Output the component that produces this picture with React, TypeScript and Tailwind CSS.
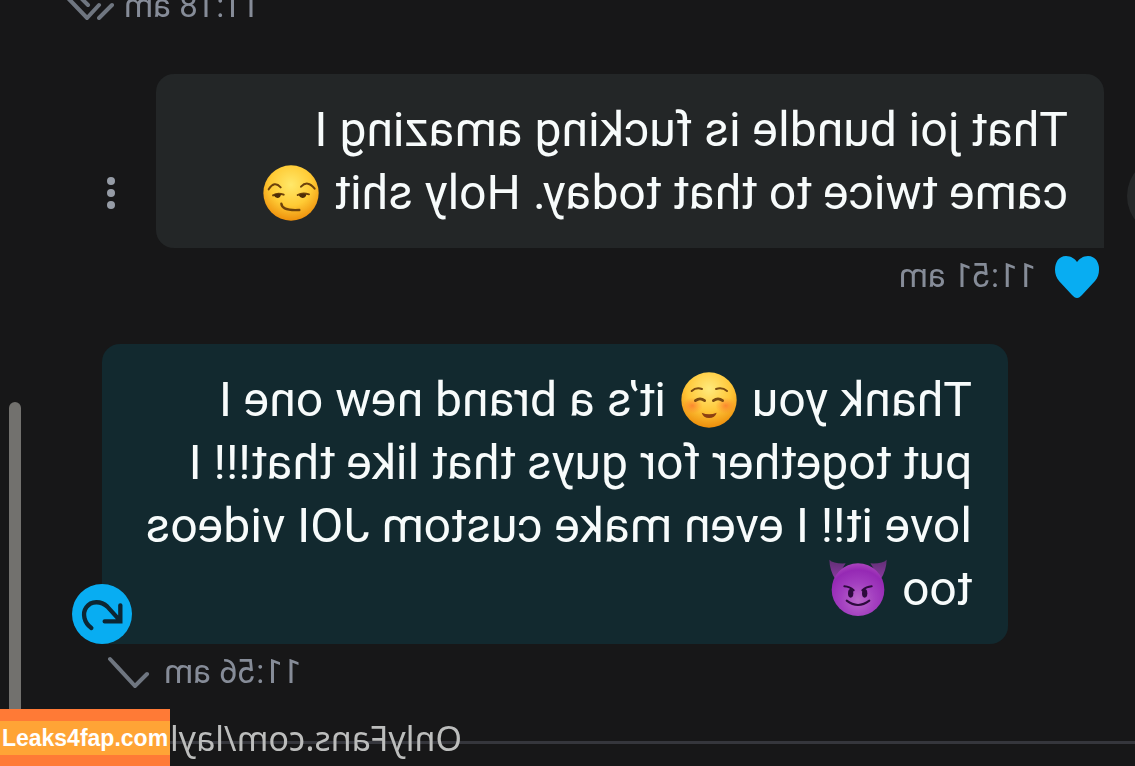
import type { ReactNode } from "react";

function Smirk() {
  return (
    <svg viewBox="0 0 168 168" className="mx-[3px] inline-block size-14 -scale-x-100 align-[-12px]" role="img" aria-label="smirking face">
      <defs>
        <radialGradient id="smirkFace" cx="0.5" cy="0.35" r="0.68">
          <stop offset="0" stopColor="#ffe86a" />
          <stop offset="0.55" stopColor="#ffcb35" />
          <stop offset="1" stopColor="#ec8a08" />
        </radialGradient>
      </defs>
      <circle cx="84" cy="84" r="83" fill="url(#smirkFace)" />
      <g fill="none" stroke="#6d420b" strokeLinecap="round">
        <path d="M17 73Q34 46 53 67M114 65Q134 44 155 71" strokeWidth="6" />
        <path d="M30 91Q44 82 62 89M104 90Q118 82 138 88" strokeWidth="6" />
        <path d="M55 116C56 132 76 137 109 135" strokeWidth="7" />
      </g>
      <path d="M32 90Q43 84 54 88Q53 99 43 99Q35 98 32 90ZM107 90Q118 84 130 88Q129 99 118 99Q110 98 107 90Z" fill="#4d2d08" />
    </svg>
  );
}

function Blush() {
  return (
    <svg viewBox="0 0 168 168" className="mx-[3px] inline-block size-14 -scale-x-100 align-[-12px]" role="img" aria-label="smiling face">
      <defs>
        <radialGradient id="blushFace" cx="0.5" cy="0.3" r="0.72">
          <stop offset="0" stopColor="#ffea7c" />
          <stop offset="0.55" stopColor="#ffc83a" />
          <stop offset="1" stopColor="#ec8a08" />
        </radialGradient>
        <radialGradient id="blushCheek">
          <stop offset="0" stopColor="#fb6f2d" stopOpacity="0.7" />
          <stop offset="1" stopColor="#fb7f2d" stopOpacity="0" />
        </radialGradient>
      </defs>
      <circle cx="84" cy="84" r="83" fill="url(#blushFace)" />
      <ellipse cx="34" cy="101" rx="31" ry="25" fill="url(#blushCheek)" />
      <ellipse cx="134" cy="101" rx="31" ry="25" fill="url(#blushCheek)" />
      <g fill="none" stroke="#7a4a10" strokeLinecap="round">
        <path d="M32 57Q45 45 63 51M105 51Q124 45 138 57" strokeWidth="6" />
        <path d="M43 86Q57 75 71 86M97 86Q111 75 125 86" strokeWidth="8" />
      </g>
      <path d="M62 122Q84 132 107 122Q102 138 84 138Q67 138 62 122Z" fill="#8b3f12" />
    </svg>
  );
}

function Devil() {
  return (
    <svg viewBox="0 0 174 174" className="mx-[3px] inline-block size-[58px] -scale-x-100 align-[-12px]" role="img" aria-label="smiling face with horns">
      <defs>
        <radialGradient id="devilFace" cx="0.5" cy="0.7" r="0.72">
          <stop offset="0" stopColor="#b968c9" />
          <stop offset="0.45" stopColor="#a33fc0" />
          <stop offset="0.8" stopColor="#9529b4" />
          <stop offset="1" stopColor="#ad48be" />
        </radialGradient>
        <linearGradient id="devilHorn" x1="0" y1="0" x2="0" y2="1">
          <stop offset="0" stopColor="#5f2f72" />
          <stop offset="1" stopColor="#8c3aa4" />
        </linearGradient>
      </defs>
      <path d="M1 2Q14 15 50 13L19 61Q2 34 1 2ZM173 2Q160 15 124 13L155 61Q172 34 173 2Z" fill="url(#devilHorn)" />
      <circle cx="87" cy="92" r="79" fill="url(#devilFace)" />
      <ellipse cx="65" cy="103" rx="8" ry="13" fill="#2c0b3c" />
      <ellipse cx="107" cy="103" rx="8" ry="13" fill="#2c0b3c" />
      <g fill="none" stroke="#2c0b3c" strokeLinecap="round" strokeWidth="6">
        <path d="M46 82Q62 83 74 94M128 82Q112 83 100 94" />
        <path d="M53 125Q87 151 121 125" />
      </g>
    </svg>
  );
}

function Bubble({ lines, className }: { lines: ReactNode[]; className: string }) {
  return (
    <div className={`min-w-0 flex-1 px-9 py-6 text-[48px] leading-[63px] whitespace-nowrap text-[#f7fbfb] ${className}`}>
      {lines.map((line, i) => (
        <p key={i} className="h-[63px]">{line}</p>
      ))}
    </div>
  );
}

export default function App() {
  return (
    <div className="relative h-screen overflow-hidden bg-[#171718] font-['Roboto',sans-serif]">
      <div className="-scale-x-100">
        <main className="-mt-[22px] flex flex-col gap-10 pr-[102px] pl-[31px] text-[33px] text-[#868c98]">
          <div className="-mr-[38px] flex h-14 items-center justify-end gap-2.5">
            <time>11:18 am</time>
            <svg viewBox="0 0 50 28" className="h-7 w-[50px] -scale-x-100" fill="none" stroke="#6f7680" strokeWidth="4" strokeLinecap="round" aria-hidden="true">
              <path d="M2 4L23 26L35 13M35 26L48 13M12 1L24 13" />
            </svg>
          </div>

          <article>
            <div className="relative flex">
              <span className="absolute top-[82px] -left-[103px] size-20 rounded-full bg-[#262829]" />
              <Bubble
                className="rounded-[18px] rounded-bl-none bg-[#232627]"
                lines={[
                  "That joi bundle is fucking amazing I",
                  <>came twice to that today. Holy shit <Smirk /></>,
                ]}
              />
              <button type="button" aria-label="Message options" className="flex w-[54px] items-center justify-end pt-16">
                <svg viewBox="0 0 18 34" className="h-[34px] w-[18px]" fill="#969ca6" aria-hidden="true">
                  <circle cx="9" cy="5" r="4" />
                  <circle cx="9" cy="17" r="4" />
                  <circle cx="9" cy="29" r="4" />
                </svg>
              </button>
            </div>
            <div className="flex h-14 items-center gap-[18px] pl-1">
              <button type="button" aria-label="Like">
                <svg viewBox="0 0 46 44" className="h-11 w-[46px]" fill="#08adf2" aria-hidden="true">
                  <path d="M23 44C21 44 20 43 18 41L5 27C-2 19 0 2 12 2C17 2 21 5 23 8C25 5 29 2 34 2C46 2 48 19 41 27L28 41C26 43 25 44 23 44Z" />
                </svg>
              </button>
              <time>11:51 am</time>
            </div>
          </article>

          <article>
            <div className="relative ml-24 flex">
              <Bubble
                className="rounded-[18px] rounded-br-none bg-[#12292f]"
                lines={[
                  <>Thank you <Blush /> it’s a brand new one I</>,
                  "put together for guys that like that!!! I",
                  "love it!! I even make custom JOI videos",
                  <>too <Devil /></>,
                ]}
              />
              <button type="button" aria-label="Resend" className="absolute -right-[30px] bottom-0 size-[60px] rounded-full bg-[#08adf2]">
                <svg viewBox="0 0 180 180" className="size-[60px] -scale-x-100" fill="none" stroke="#0c2633" strokeWidth="13" strokeLinecap="round" strokeLinejoin="miter" aria-hidden="true">
                  <path d="M58 132C36 116 30 88 43 70C57 50 87 50 106 68L144 110M145 64V112H98" />
                </svg>
              </button>
            </div>
            <div className="flex h-14 items-center justify-end gap-3.5 pr-1">
              <time>11:56 am</time>
              <svg viewBox="0 0 44 32" className="h-8 w-11 -scale-x-100" fill="none" stroke="#6f7680" strokeWidth="4" strokeLinecap="round" aria-hidden="true">
                <path d="M4 3L29 30L41 18" />
              </svg>
            </div>
          </article>
        </main>

        <footer className="grid h-[84px] items-center">
          <hr className="col-start-1 row-start-1 border-t-[3px] border-[#35363c]" />
          <p className="z-10 col-start-1 row-start-1 pr-[170px] pb-2 text-right font-['Noto_Sans',sans-serif] text-[34px] leading-none text-[#bcbdbc]">
            OnlyFans.com/layl
          </p>
        </footer>
      </div>

      <span className="absolute top-[402px] bottom-0 left-[9px] w-3 rounded-t-full bg-[#72716e]" />
      <div className="absolute bottom-0 left-0 z-20 bg-[#ff7a36] pt-3 pb-[11px] font-['Liberation_Sans',sans-serif] text-[23px] font-bold text-white">
        <p className="w-[170px] bg-[#ffa436] text-center leading-[34px]">Leaks4fap.com</p>
      </div>
    </div>
  );
}
